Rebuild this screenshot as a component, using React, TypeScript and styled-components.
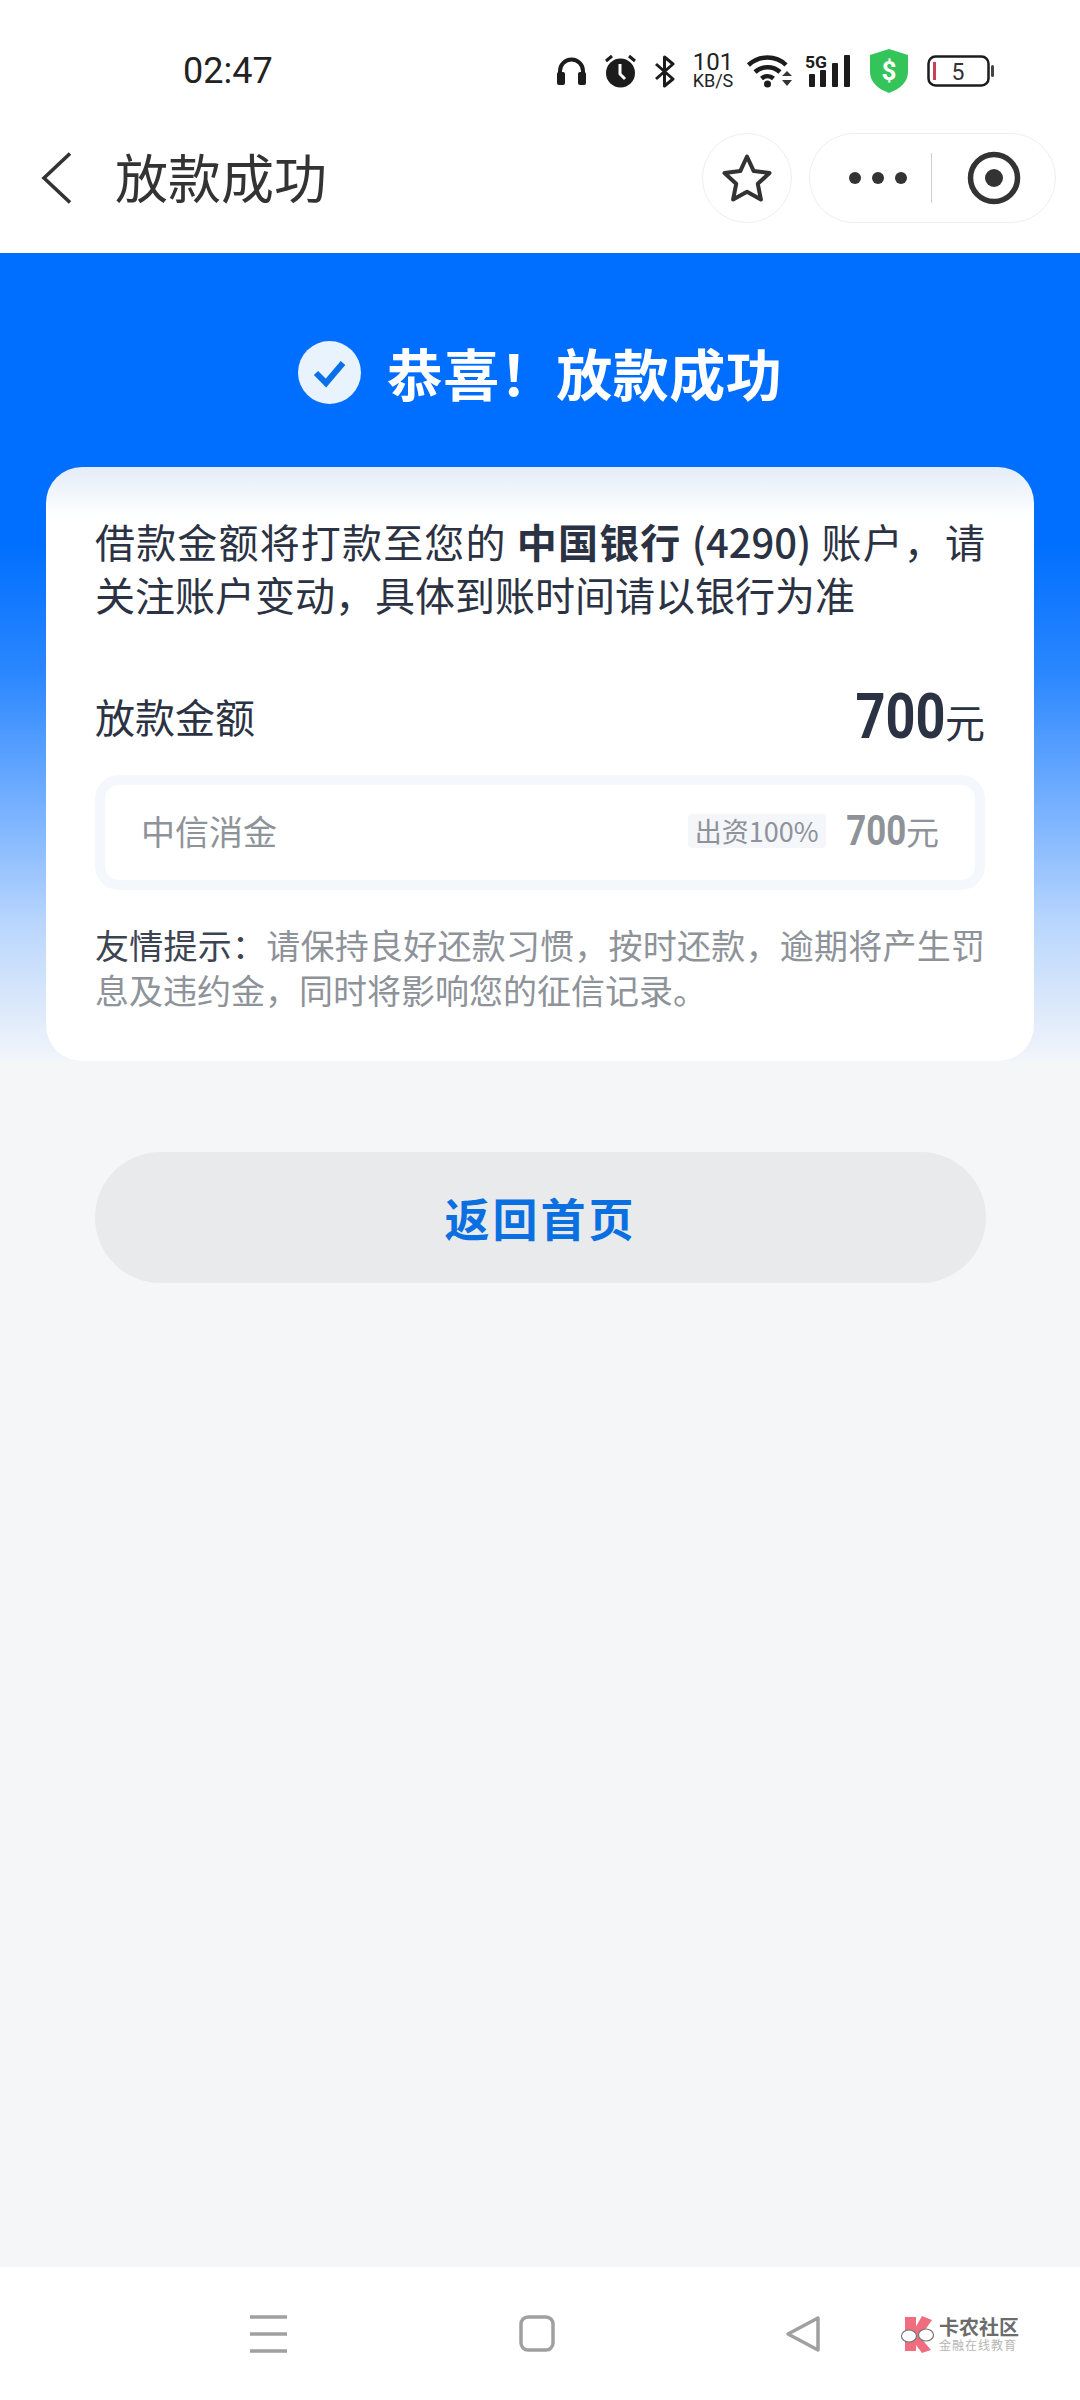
import React from 'react';
import styled, { createGlobalStyle } from 'styled-components';

const COMMA = '\uFF0C';
const COLON = '\uFF1A';
const BANG = '\uFF01';
const STOP = '\u3002';

const HERO_TEXT = `恭喜${BANG}放款成功`;
const NOTICE_TAIL = `账户${COMMA}请关注账户变动${COMMA}具体到账时间请以银行为准`;
const TIP_LEAD = `友情提示${COLON}`;
const TIP_BODY = `请保持良好还款习惯${COMMA}按时还款${COMMA}逾期将产生罚息及违约金${COMMA}同时将影响您的征信记录${STOP}`;

const Global = createGlobalStyle`
  html, body { margin: 0; padding: 0; background: #fff; }
  body { font-family: "Noto Sans CJK SC", "Noto Sans", sans-serif; }
  * { box-sizing: border-box; }
`;
const Page = styled.div`
  width: 1080px; height: 2400px; display: flex; flex-direction: column; background: #f5f6f8; overflow: hidden;
`;
const StatusBar = styled.div`
  height: 100px; padding: 42px 86px 0 183px; display: flex; align-items: center; background: #fff;
`;
const Time = styled.span`
  font-family: Roboto, sans-serif; font-size: 36px; color: #222; width: 88px;
`;
const StatusIcons = styled.div`
  margin-left: auto; display: flex; align-items: center;
`;
const StatusIcon = styled.svg<{ $gap?: number }>`
  display: block; flex: none; margin-left: ${p => p.$gap ?? 0}px;
`;
const Speed = styled.div<{ $gap: number }>`
  margin-left: ${p => p.$gap}px; width: 44px; display: flex; flex-direction: column; align-items: center;
  font-family: Roboto, sans-serif; color: #222; line-height: 1;
`;
const SpeedValue = styled.span` font-size: 24px; line-height: 19px; `;
const SpeedUnit = styled.span` font-size: 18px; line-height: 17px; `;
const NavBar = styled.div`
  height: 153px; padding: 3px 24px 0 41px; display: flex; align-items: center; background: #fff;
`;
const NavTitle = styled.h1`
  margin: -3px 0 0 44px; font-size: 53px; font-weight: 400; color: #333; line-height: 1; flex: 1;
`;
const StarButton = styled.div`
  width: 90px; height: 90px; border: 1px solid #eeeeee; border-radius: 50%; display: flex; align-items: center; justify-content: center;
`;
const Capsule = styled.div`
  margin-left: 17px; width: 247px; height: 90px; border: 1px solid #eeeeee; border-radius: 45px; display: flex; align-items: center; padding-left: 39px;
`;
const Dots = styled.div` display: flex; gap: 11px; `;
const Dot = styled.i` display: block; width: 12px; height: 12px; border-radius: 50%; background: #333; `;
const Divider = styled.div` width: 1px; height: 50px; background: #cfcfcf; margin-left: 24px; `;
const BrowserMark = styled.svg` margin-left: 35px; `;
const Hero = styled.section`
  padding: 88px 46px 0;
  background: linear-gradient(180deg, #006fff 0%, #006fff 36%, #2b87ff 52%, #7db4ff 70%, #b9d6fd 83%, #f2f5fa 100%);
`;
const HeroTitle = styled.div`
  height: 62px; display: flex; align-items: center; justify-content: center; gap: 26px;
`;
const HeroText = styled.h2`
  margin: 0; font-size: 56px; font-weight: 700; color: #fff; line-height: 1; letter-spacing: 0.5px;
`;
const Card = styled.div`
  margin-top: 64px; height: 594px; padding: 48px 49px 0; border-radius: 36px;
  background: linear-gradient(180deg, #e3ecf8 0, #ffffff 50px);
`;
const Notice = styled.p`
  margin: 0; font-size: 40px; line-height: 53px; color: #2b3243; text-align: justify;
`;
const Strong = styled.b` font-weight: 700; `;
const Account = styled.span` font-weight: 500; `;
const AmountRow = styled.div`
  margin-top: 58px; height: 74px; display: flex; align-items: center; justify-content: space-between;
`;
const AmountLabel = styled.span` font-size: 40px; color: #2b3243; `;
const Amount = styled.span<{ $muted?: boolean }>`
  display: flex; align-items: baseline; color: ${p => (p.$muted ? '#8e9299' : '#2b3243')};
`;
const AmountNum = styled.span<{ $size: number }>`
  display: inline-block; margin-left: -0.286em; transform: scaleX(0.83); transform-origin: right center;
  font-family: Roboto, "Liberation Sans", sans-serif; font-weight: 700; font-size: ${p => p.$size}px; line-height: 1;
`;
const AmountUnit = styled.span<{ $size: number }>` font-size: ${p => p.$size}px; line-height: 1; `;
const Lender = styled.div`
  margin-top: 22px; height: 115px; border: 10px solid #f4f7fc; border-radius: 24px; background: #fff;
  display: flex; align-items: center; padding: 0 36px 4px;
`;
const LenderName = styled.span` font-size: 34px; color: #8e9299; flex: 1; `;
const LenderTag = styled.span`
  width: 138px; height: 34px; background: #f4f6f9; border-radius: 4px; margin-right: 20px;
  display: flex; align-items: center; justify-content: center; font-size: 27px; line-height: 1; color: #8e9299;
`;
const Tip = styled.p`
  margin: 32px 0 0; font-size: 34px; line-height: 45px; color: #8e9299; text-align: justify;
`;
const TipLead = styled.span` color: #3c4452; `;
const Main = styled.main`
  flex: 1; padding: 91px 94px 0 95px;
`;
const HomeButton = styled.div`
  height: 131px; border-radius: 66px; background: #e9eaec; display: flex; align-items: center; justify-content: center;
  font-size: 45px; font-weight: 700; color: #0a6fe0; letter-spacing: 3px;
`;
const BottomBar = styled.div`
  height: 133px; background: #fff; display: flex; align-items: center; padding-left: 250px;
`;
const NavShape = styled.svg<{ $gap: number }>` margin-left: ${p => p.$gap}px; `;
const Logo = styled.div<{ $gap: number }>`
  margin-left: ${p => p.$gap}px; display: flex; align-items: center; gap: 3px;
`;
const LogoText = styled.div` display: flex; flex-direction: column; `;
const LogoMain = styled.span` font-size: 20px; line-height: 22px; font-weight: 700; color: #6c6c6c; white-space: nowrap; `;
const LogoSub = styled.span` font-size: 12px; line-height: 14px; color: #b5b5b5; letter-spacing: 1px; white-space: nowrap; `;

export default function App() {
  return (
    <Page>
      <Global />
      <StatusBar>
        <Time>02:47</Time>
        <StatusIcons>
          <StatusIcon width={31} height={30} viewBox="0 0 31 30">
            <path d="M4 20V15a11.5 11.5 0 0 1 23 0v5" fill="none" stroke="#1c1c1c" strokeWidth="4" />
            <rect x="1" y="16" width="8" height="13" rx="2" fill="#1c1c1c" />
            <rect x="22" y="16" width="8" height="13" rx="2" fill="#1c1c1c" />
          </StatusIcon>
          <StatusIcon $gap={17} width={33} height={34} viewBox="0 0 33 34">
            <circle cx="16.5" cy="19" r="14.5" fill="#1c1c1c" />
            <path d="M16 10v10l5 5" fill="none" stroke="#fff" strokeWidth="3" />
            <path d="M2 7l6-5M31 7l-6-5" fill="none" stroke="#1c1c1c" strokeWidth="3" />
          </StatusIcon>
          <StatusIcon $gap={17} width={21} height={33} viewBox="0 0 21 33">
            <path d="M2 9l17 15-8.5 7V2L19 9 2 24" fill="none" stroke="#1c1c1c" strokeWidth="3" strokeLinejoin="round" />
          </StatusIcon>
          <Speed $gap={16}>
            <SpeedValue>101</SpeedValue>
            <SpeedUnit>KB/S</SpeedUnit>
          </Speed>
          <StatusIcon $gap={12} width={45} height={34} viewBox="0 0 45 34">
            <path d="M1.5 11C12 1 29 1 39 11M8 18c7-6.500 18-6.500 25 0M14.500 24.500c3.500-3 8.500-3 12 0" fill="none" stroke="#1c1c1c" strokeWidth="4.500" />
            <circle cx="20.500" cy="30" r="3.500" fill="#1c1c1c" />
            <path d="M35 22h10l-5-5zM35 26h10l-5 6z" fill="#333" />
          </StatusIcon>
          <StatusIcon $gap={13} width={47} height={34} viewBox="0 0 47 34">
            <text x="0" y="14" fontFamily="Roboto, sans-serif" fontWeight="700" fontSize="16" fill="#1c1c1c" textLength="22" lengthAdjust="spacingAndGlyphs">5G</text>
            <rect x="4" y="20" width="6" height="13" rx="1" fill="#1c1c1c" />
            <rect x="15" y="16" width="6" height="17" rx="1" fill="#1c1c1c" />
            <rect x="27" y="9" width="6" height="24" rx="1" fill="#1c1c1c" />
            <rect x="39" y="1" width="6" height="32" rx="1" fill="#1c1c1c" />
          </StatusIcon>
          <StatusIcon $gap={17} width={40} height={44} viewBox="0 0 40 44">
            <path d="M20 0l19 6v17c0 10-8 17-19 21C9 40 1 33 1 23V6z" fill="#35c45a" />
            <text x="20" y="31" textAnchor="middle" fontFamily="Roboto, sans-serif" fontWeight="700" fontSize="26" fill="#fff">$</text>
          </StatusIcon>
          <StatusIcon $gap={18} width={67} height={32} viewBox="0 0 67 32">
            <rect x="1.500" y="1.500" width="60" height="29" rx="7" fill="#fff" stroke="#1c1c1c" strokeWidth="2.500" />
            <rect x="6" y="7" width="3" height="18" fill="#c8405c" />
            <rect x="64" y="10" width="3" height="12" rx="1.500" fill="#444" />
            <text x="31" y="25" textAnchor="middle" fontFamily="Roboto, sans-serif" fontSize="23" fill="#333">5</text>
          </StatusIcon>
        </StatusIcons>
      </StatusBar>
      <NavBar>
        <svg width="30" height="52" viewBox="0 0 30 52">
          <path d="M29 1.500L3 26l26 24.500" fill="none" stroke="#333" strokeWidth="3.600" />
        </svg>
        <NavTitle>放款成功</NavTitle>
        <StarButton>
          <svg width="50" height="50" viewBox="0 0 50 50">
            <path d="M25 3.500l6.700 14.600 15.800 1.900-11.700 10.800 3.100 15.700L25 38.700l-13.900 7.800 3.100-15.700L2.500 20l15.800-1.900z" fill="none" stroke="#333" strokeWidth="4" strokeLinejoin="round" />
          </svg>
        </StarButton>
        <Capsule>
          <Dots><Dot /><Dot /><Dot /></Dots>
          <Divider />
          <BrowserMark width="54" height="54" viewBox="0 0 54 54">
            <circle cx="27" cy="27" r="23.500" fill="none" stroke="#333" strokeWidth="5.500" />
            <circle cx="27" cy="27" r="9" fill="#333" />
          </BrowserMark>
        </Capsule>
      </NavBar>
      <Hero>
        <HeroTitle>
          <svg width="63" height="63" viewBox="0 0 63 63">
            <circle cx="31.500" cy="31.500" r="31.500" fill="#e8f3fe" />
            <path d="M18 32l10 10 17-20" fill="none" stroke="#0a6fe8" strokeWidth="6" />
          </svg>
          <HeroText>{HERO_TEXT}</HeroText>
        </HeroTitle>
        <Card>
          <Notice>
            借款金额将打款至您的 <Strong>中国银行</Strong> <Account>(4290)</Account> {NOTICE_TAIL}
          </Notice>
          <AmountRow>
            <AmountLabel>放款金额</AmountLabel>
            <Amount>
              <AmountNum $size={63}>700</AmountNum>
              <AmountUnit $size={40}>元</AmountUnit>
            </Amount>
          </AmountRow>
          <Lender>
            <LenderName>中信消金</LenderName>
            <LenderTag>出资100%</LenderTag>
            <Amount $muted>
              <AmountNum $size={42}>700</AmountNum>
              <AmountUnit $size={33}>元</AmountUnit>
            </Amount>
          </Lender>
          <Tip>
            <TipLead>{TIP_LEAD}</TipLead>{TIP_BODY}
          </Tip>
        </Card>
      </Hero>
      <Main>
        <HomeButton>返回首页</HomeButton>
      </Main>
      <BottomBar>
        <svg width="37" height="38" viewBox="0 0 37 38">
          <path d="M0 2h37M0 19h37M0 36h37" stroke="#a0a0a0" strokeWidth="3.500" />
        </svg>
        <NavShape $gap={232} width="36" height="37" viewBox="0 0 36 37">
          <rect x="2" y="2" width="32" height="33" rx="7" fill="none" stroke="#a0a0a0" strokeWidth="3.500" />
        </NavShape>
        <NavShape $gap={230} width="36" height="38" viewBox="0 0 36 38">
          <path d="M33 3v32L3 19z" fill="none" stroke="#a0a0a0" strokeWidth="3.500" strokeLinejoin="round" />
        </NavShape>
        <Logo $gap={79}>
          <svg width="36" height="38" viewBox="0 0 36 38">
            <path d="M5 2h11v34H5z" fill="#ef6d7f" />
            <path d="M22 1l10 4-12 17 11 13-9 3-12-16z" fill="#ef6d7f" />
            <ellipse cx="9" cy="21" rx="7.500" ry="6" fill="#fff" stroke="#777" strokeWidth="1.200" />
            <ellipse cx="26" cy="20" rx="7.500" ry="6" fill="#fff" stroke="#777" strokeWidth="1.200" />
          </svg>
          <LogoText>
            <LogoMain>卡农社区</LogoMain>
            <LogoSub>金融在线教育</LogoSub>
          </LogoText>
        </Logo>
      </BottomBar>
    </Page>
  );
}
